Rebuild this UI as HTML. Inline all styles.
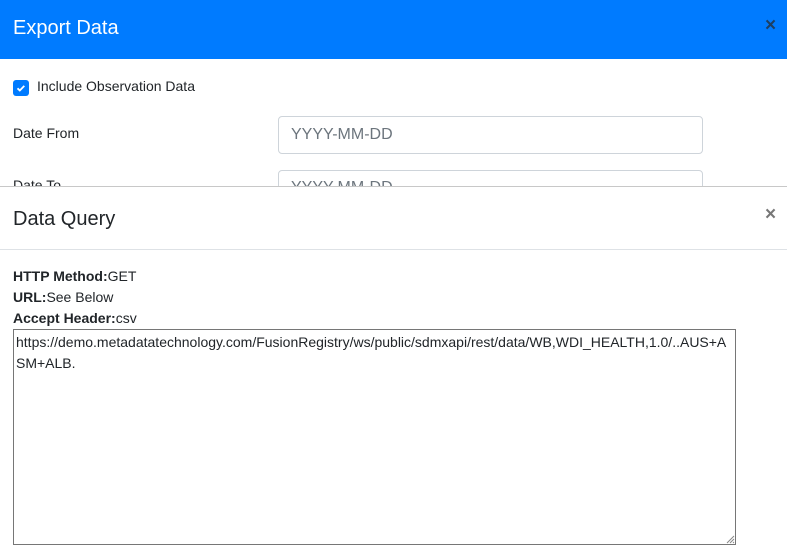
<!DOCTYPE html>
<html><head><style>
body{margin:0;width:787px;height:557px;overflow:hidden;background:#fff;font-family:"Liberation Sans",Arial,sans-serif;color:#212529;position:relative}
.a{position:absolute;white-space:nowrap}
</style></head><body>
<div class="a" style="left:0;top:0;width:787px;height:59px;background:#007bff"></div>
<div class="a" style="left:13px;top:17px;font-size:20px;color:#fff">Export Data</div>
<div class="a" style="left:765px;top:15px;font-size:19px;font-weight:bold;color:#1d3f63">×</div>
<div class="a" style="left:13px;top:80px;width:16px;height:16px;background:#007bff;border-radius:3px"></div>
<svg class="a" style="left:13px;top:80px" width="16" height="16"><path d="M4.5 8.3l2.3 2.2 4.5-4.6" stroke="#fff" stroke-width="1.8" fill="none"/></svg>
<div class="a" style="left:37px;top:78px;font-size:14px">Include Observation Data</div>
<div class="a" style="left:13px;top:125px;font-size:14px">Date From</div>
<div class="a" style="left:278px;top:116px;width:423px;height:36px;border:1px solid #ced4da;border-radius:4px"></div>
<div class="a" style="left:291px;top:126px;font-size:16px;color:#6c757d">YYYY-MM-DD</div>
<div class="a" style="left:13px;top:177px;font-size:14px">Date To</div>
<div class="a" style="left:278px;top:170px;width:423px;height:36px;border:1px solid #ced4da;border-radius:4px"></div>
<div class="a" style="left:291px;top:179px;font-size:16px;color:#6c757d">YYYY-MM-DD</div>
<div class="a" style="left:0;top:186px;width:787px;height:371px;background:#fff;border-top:1px solid #c8c8c8"></div>
<div class="a" style="left:13px;top:208px;font-size:20px">Data Query</div>
<div class="a" style="left:765px;top:204px;font-size:19px;font-weight:bold;color:#777">×</div>
<div class="a" style="left:0;top:249px;width:787px;height:1px;background:#dee2e6"></div>
<div class="a" style="left:13px;top:268px;font-size:14px"><b>HTTP Method:</b>GET</div>
<div class="a" style="left:13px;top:289px;font-size:14px"><b>URL:</b>See Below</div>
<div class="a" style="left:13px;top:310px;font-size:14px"><b>Accept Header:</b>csv</div>
<div class="a" style="left:13px;top:329px;width:721px;height:214px;border:1px solid #767676"></div>
<div class="a" style="left:16px;top:332px;font-size:14px;line-height:21px">https://demo.metadatatechnology.com/FusionRegistry/ws/public/sdmxapi/rest/data/WB,WDI_HEALTH,1.0/..AUS+A<br>SM+ALB.</div>
<svg class="a" style="left:725px;top:534px" width="10" height="10"><path d="M9 2L2 9M9 5L5 9M9 8L8 9" stroke="#888" stroke-width="1"/></svg>
</body></html>
